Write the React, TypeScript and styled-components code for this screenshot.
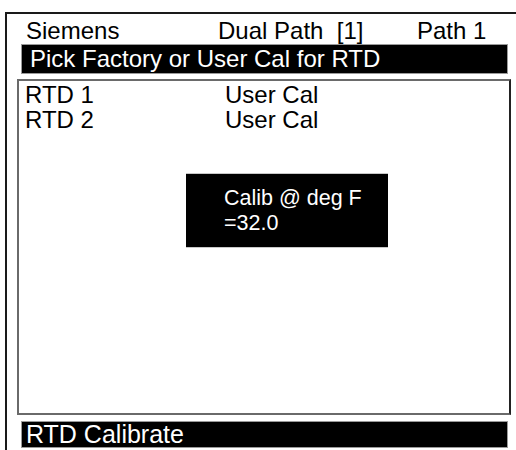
import styled, { createGlobalStyle } from 'styled-components';

const GlobalStyle = createGlobalStyle`
  html, body {
    margin: 0;
    padding: 0;
    background: #fff;
  }
  body {
    font-family: 'Liberation Sans', Arial, sans-serif;
    color: #000;
  }
`;

const Screen = styled.div`
  width: 516px;
  height: 450px;
  overflow: hidden;
  padding: 12px 0 0 5px;
  box-sizing: border-box;
`;

const Frame = styled.div`
  height: 438px;
  box-sizing: border-box;
  border-top: 2px solid #1a1a1a;
  border-left: 2px solid #1a1a1a;
  display: flex;
  flex-direction: column;
`;

const Header = styled.div`
  display: grid;
  grid-template-columns: 192px 199px auto;
  height: 30px;
  box-sizing: border-box;
  padding: 3px 0 0 19px;
  font-size: 24px;
  line-height: 27px;
  white-space: pre;
`;

const Bar = styled.div<{ $pad: number; $size: number; $h: number }>`
  margin: 0 8px 0 14px;
  height: ${(p) => p.$h}px;
  box-sizing: border-box;
  background: #000;
  border: 1px solid #9a9a9a;
  color: #fff;
  font-size: ${(p) => p.$size}px;
  line-height: ${(p) => p.$h - 2}px;
  padding-left: ${(p) => p.$pad}px;
  white-space: nowrap;
`;

const ListBox = styled.div`
  position: relative;
  margin: 5px 5px 0 10px;
  height: 336px;
  box-sizing: border-box;
  border: 2px solid #6a6a6a;
  border-right-color: #222;
  padding: 1px 0 0 6px;
`;

const Row = styled.div`
  display: grid;
  grid-template-columns: 200px auto;
  font-size: 24px;
  line-height: 25px;
`;

const Popup = styled.div`
  position: absolute;
  left: 167px;
  top: 92px;
  width: 202px;
  height: 75px;
  box-sizing: border-box;
  background: #000;
  border-top: 1px solid #c8c8c8;
  border-bottom: 1px solid #c8c8c8;
  color: #fff;
  font-size: 21.5px;
  line-height: 25px;
  padding: 12px 0 0 38px;
`;

const Footer = styled(Bar)`
  margin-top: 6px;
`;

const rows = [
  { name: 'RTD 1', value: 'User Cal' },
  { name: 'RTD 2', value: 'User Cal' },
];

export default function App() {
  return (
    <Screen>
      <GlobalStyle />
      <Frame>
        <Header>
          <span>Siemens</span>
          <span>Dual Path  [1]</span>
          <span>Path 1</span>
        </Header>
        <Bar $pad={8} $size={24} $h={30}>
          Pick Factory or User Cal for RTD
        </Bar>
        <ListBox>
          {rows.map((r) => (
            <Row key={r.name}>
              <span>{r.name}</span>
              <span>{r.value}</span>
            </Row>
          ))}
          <Popup>
            <div>Calib @ deg F</div>
            <div>=32.0</div>
          </Popup>
        </ListBox>
        <Footer $pad={4} $size={25} $h={27}>
          RTD Calibrate
        </Footer>
      </Frame>
    </Screen>
  );
}
